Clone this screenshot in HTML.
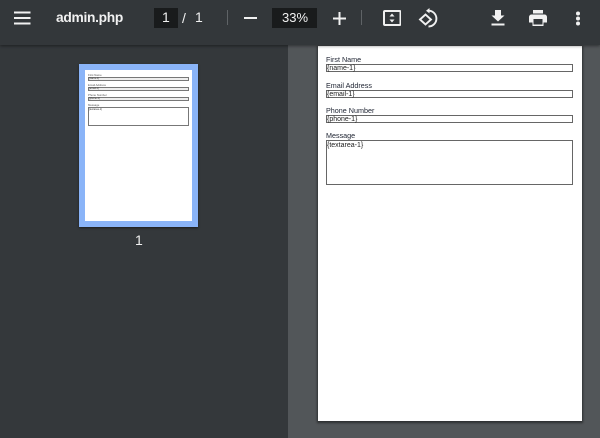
<!DOCTYPE html>
<html>
<head>
<meta charset="utf-8">
<style>
html,body{margin:0;padding:0}
body{width:600px;height:438px;overflow:hidden;position:relative;background:#525659;font-family:"Liberation Sans",sans-serif}
div,span,svg{position:absolute}
#side{left:0;top:0;width:288px;height:438px;background:#34383b}
#bar{left:0;top:0;width:600px;height:45px;background:#33373a;box-shadow:0 1px 3px rgba(0,0,0,.45);z-index:5}
.t{color:#f1f1f1;white-space:nowrap;line-height:16px}
.box{background:#191b1c}
.sep{width:1px;height:15px;top:10px;background:#5f6366}
#page{left:318px;top:46px;width:264px;height:375px;background:#fff;box-shadow:0 1px 2px 1px rgba(0,0,0,.45)}
.f{position:absolute;box-sizing:border-box;left:326px;width:247px;border:1px solid #666;z-index:1}
.l{font-size:7.200px;color:#1c2230;left:326px;z-index:1;line-height:9px;white-space:nowrap}
.v{font-size:7px;color:#222;left:327px;z-index:2;line-height:9px;white-space:nowrap}
#thumb{left:79px;top:64px;width:119px;height:163px;background:#8ab4f8;box-shadow:0 1px 2px rgba(0,0,0,.5)}
#tp{left:6px;top:6px;width:107px;height:151px;background:#fff}
.tf{position:absolute;box-sizing:border-box;left:3px;width:101px;border:1px solid #777;background:#eee;font-size:2.500px;line-height:2px;color:#333;white-space:nowrap}
.tl{position:absolute;left:3px;font-size:2.800px;line-height:3px;color:#555;white-space:nowrap}
</style>
</head>
<body>
<div id="side"></div>
<div id="bar">
  <svg style="left:14px;top:11px" width="17" height="14" viewBox="0 0 17 14"><path d="M0 1.500h16.500M0 7h16.500M0 12.500h16.500" stroke="#f1f1f1" stroke-width="2"/></svg>
  <div class="t" style="left:56px;top:10px;font-size:13.800px;font-weight:bold;letter-spacing:-.3px">admin.php</div>
  <div class="box" style="left:154px;top:8px;width:24px;height:20px"></div>
  <div class="t" style="left:162px;top:9px;font-size:14px">1</div>
  <div class="t" style="left:182px;top:10px;font-size:14px">/</div>
  <div class="t" style="left:195px;top:9px;font-size:14px">1</div>
  <div class="sep" style="left:227px"></div>
  <svg style="left:244px;top:17px" width="13" height="2"><rect width="13" height="2" fill="#f1f1f1"/></svg>
  <div class="box" style="left:272px;top:8px;width:45px;height:20px"></div>
  <div class="t" style="left:282px;top:10px;font-size:13px">33%</div>
  <svg style="left:333px;top:12px" width="13" height="13"><path d="M0 6.500h13M6.500 0v13" stroke="#f1f1f1" stroke-width="2"/></svg>
  <div class="sep" style="left:361px"></div>
  <svg style="left:383px;top:10px" width="18" height="16" viewBox="0 0 18 16"><rect x="1" y="1" width="16.500" height="14" rx="1" fill="none" stroke="#f1f1f1" stroke-width="2"/><path d="M9 3.500l2.500 3h-5zM9 12.500l2.500-3h-5z" fill="#f1f1f1"/></svg>
  <svg style="left:418px;top:8px" width="20" height="20" viewBox="0 0 20 20"><path d="M2 11.500L7.500 6.500L13 11.500L7.500 16.500Z" fill="none" stroke="#f1f1f1" stroke-width="1.900"/><path d="M10.500 2.700a7.900 7.900 0 1 1 0 15.800" fill="none" stroke="#f1f1f1" stroke-width="1.900"/><path d="M11.500 0L8 2.700L11.500 5.400Z" fill="#f1f1f1"/></svg>
  <svg style="left:491px;top:10px" width="14" height="16" viewBox="0 0 14 16"><path d="M4 0h6v5.500h3.500L7 11.500L.5 5.500H4z" fill="#f1f1f1"/><rect x="0.500" y="13.500" width="13" height="2" fill="#f1f1f1"/></svg>
  <svg style="left:529px;top:10px" width="18" height="16" viewBox="0 0 18 16"><path d="M4 0h10v3.500H4z" fill="#f1f1f1"/><path d="M2.500 4.500h13A2.500 2.500 0 0 1 18 7v5.500h-3.500V16h-11v-3.500H0V7A2.500 2.500 0 0 1 2.500 4.500z" fill="#f1f1f1"/><rect x="4.500" y="9" width="9" height="5.500" fill="#33373a"/></svg>
  <svg style="left:575px;top:11px" width="6" height="15"><circle cx="3" cy="2.500" r="2" fill="#f1f1f1"/><circle cx="3" cy="7.500" r="2" fill="#f1f1f1"/><circle cx="3" cy="12.500" r="2" fill="#f1f1f1"/></svg>
</div>
<div id="thumb"><div id="tp">
  <div class="tl" style="top:4px">First Name</div><div class="tf" style="top:7px;height:4px">{name-1}</div>
  <div class="tl" style="top:14px">Email Address</div><div class="tf" style="top:17px;height:4px">{email-1}</div>
  <div class="tl" style="top:24px">Phone Number</div><div class="tf" style="top:27px;height:4px">{phone-1}</div>
  <div class="tl" style="top:34px">Message</div><div class="tf" style="top:37px;height:19px;background:#fff;line-height:3px">{textarea-1}</div>
</div></div>
<div class="t" style="left:135px;top:232px;font-size:14px">1</div>
<div id="page"></div>
<div class="l" style="top:55px">First Name</div>
<div class="f" style="top:64px;height:8px"></div>
<div class="v" style="top:64px">{name-1}</div>
<div class="l" style="top:81px">Email Address</div>
<div class="f" style="top:90px;height:8px"></div>
<div class="v" style="top:90px">{email-1}</div>
<div class="l" style="top:106px">Phone Number</div>
<div class="f" style="top:115px;height:8px"></div>
<div class="v" style="top:115px">{phone-1}</div>
<div class="l" style="top:131px">Message</div>
<div class="f" style="top:140px;height:45px"></div>
<div class="v" style="top:141px">{textarea-1}</div>
</body>
</html>
